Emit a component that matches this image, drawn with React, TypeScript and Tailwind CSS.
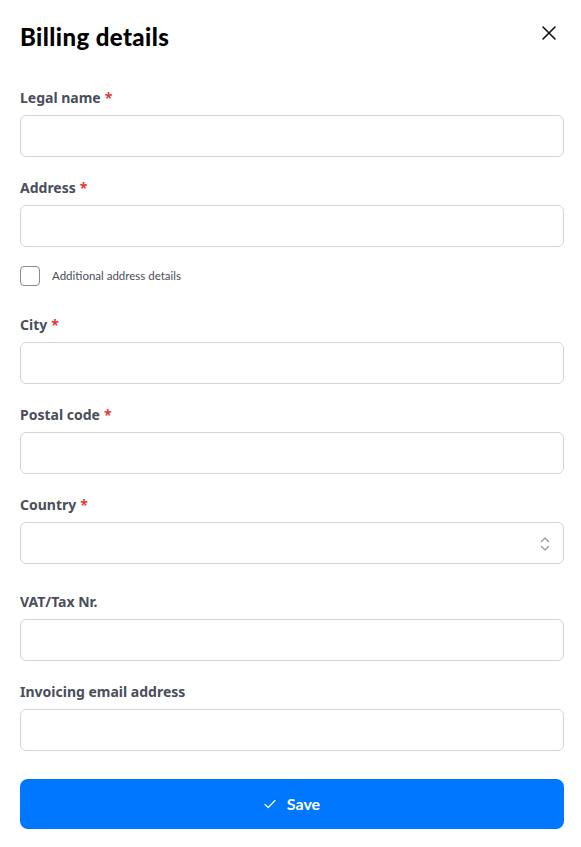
import React from "react";

function Label({ text, required }: { text: string; required?: boolean }) {
  return (
    <label className="block text-[14px] leading-[20px] font-bold text-[#4a4e5a] mb-[7px]" style={{ fontFamily: "'Noto Sans', Lato, sans-serif" }}>
      {text}
      {required && <span className="text-[#e53935] ml-[4px]">*</span>}
    </label>
  );
}

function Field({ text, required, select }: { text: string; required?: boolean; select?: boolean }) {
  return (
    <div>
      <Label text={text} required={required} />
      <div className="relative h-[42px] rounded-[6px] border border-[#d6d6d6] bg-white">
        {select && (
          <svg className="absolute right-[12px] top-[12px]" width="12" height="18" viewBox="0 0 12 18" fill="none" stroke="#9a9a9a" strokeWidth="1.3" strokeLinecap="round" strokeLinejoin="round">
            <path d="M2.5 6.5 L6 3 L9.5 6.5" />
            <path d="M2.5 11.5 L6 15 L9.5 11.5" />
          </svg>
        )}
      </div>
    </div>
  );
}

export default function App() {
  return (
    <div className="w-[581px] h-[847px] bg-white pl-[20px] pr-[17px]" style={{ fontFamily: "Lato, 'Noto Sans', sans-serif" }}>
      <div className="flex items-center justify-between h-[74px]">
        <h1 className="text-[24px] font-black text-black leading-none tracking-[0.4px]">Billing details</h1>
        <svg width="16" height="16" viewBox="0 0 16 16" className="mr-[7px] -mt-[8px]" stroke="#111" strokeWidth="1.6" strokeLinecap="round">
          <path d="M2 2 L14 14 M14 2 L2 14" />
        </svg>
      </div>
      <div className="flex flex-col pt-[14px]">
        <Field text="Legal name" required />
        <div className="h-[21px]" />
        <Field text="Address" required />
        <div className="flex items-center gap-[12px] mt-[19px] mb-[29px]">
          <div className="w-[20px] h-[20px] rounded-[4px] border border-[#8a8a8a] bg-white" />
          <span className="text-[11.5px] text-[#4a4e5a]">Additional address details</span>
        </div>
        <Field text="City" required />
        <div className="h-[21px]" />
        <Field text="Postal code" required />
        <div className="h-[21px]" />
        <Field text="Country" required select />
        <div className="h-[28px]" />
        <Field text="VAT/Tax Nr." />
        <div className="h-[21px]" />
        <Field text="Invoicing email address" />
        <button className="mt-[28px] h-[50px] w-full rounded-[8px] bg-[#0077ff] text-white flex items-center justify-center gap-[11px] text-[16px] font-bold">
          <svg width="12" height="10" viewBox="0 0 12 10" fill="none" stroke="white" strokeWidth="1.2" strokeLinecap="round" strokeLinejoin="round">
            <path d="M1 5.5 L4.2 8.5 L11 1.5" />
          </svg>
          Save
        </button>
      </div>
    </div>
  );
}
